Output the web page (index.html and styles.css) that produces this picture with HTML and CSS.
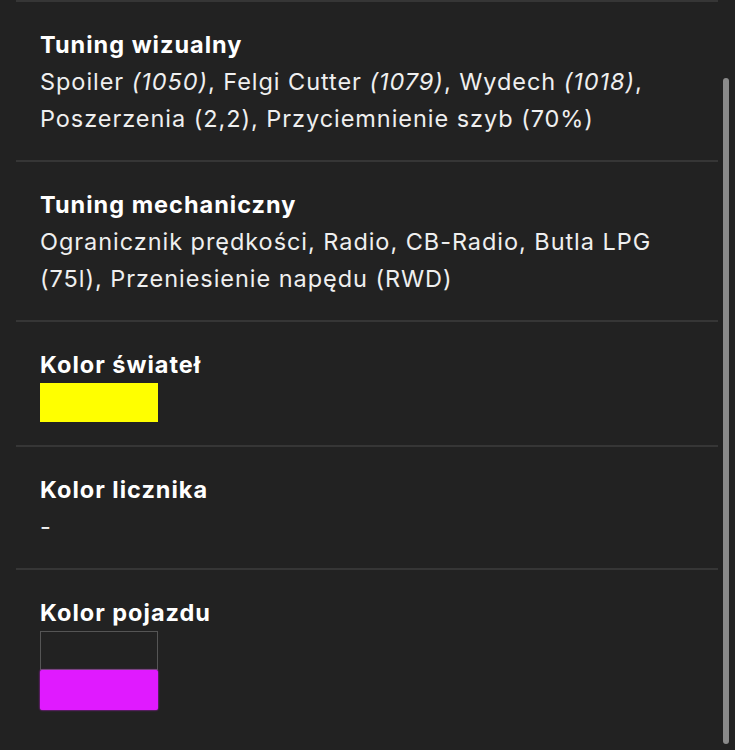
FILE: index.html
```html
<!DOCTYPE html>
<html lang="pl">
<head>
    <meta charset="UTF-8">
    <meta name="viewport" content="width=device-width, initial-scale=1.0">
    <title>Pojazd</title>
    <link rel="stylesheet" href="styles.css">
</head>
<body>
    <div class="list">
        <div class="item">
            <div class="label">Tuning wizualny</div>
            <div class="value">Spoiler <i>(1050)</i>, Felgi Cutter <i>(1079)</i>, Wydech <i>(1018)</i>, Poszerzenia (2,2), Przyciemnienie szyb (70%)</div>
        </div>
        <div class="item">
            <div class="label">Tuning mechaniczny</div>
            <div class="value">Ogranicznik prędkości, Radio, CB-Radio, Butla LPG (75l), Przeniesienie napędu (RWD)</div>
        </div>
        <div class="item">
            <div class="label">Kolor świateł</div>
            <div class="swatch yellow"></div>
        </div>
        <div class="item">
            <div class="label">Kolor licznika</div>
            <div class="value">-</div>
        </div>
        <div class="item">
            <div class="label">Kolor pojazdu</div>
            <div class="swatch dark"></div>
            <div class="swatch magenta"></div>
        </div>
    </div>
    <div class="scrollbar"></div>
</body>
</html>
```
FILE: styles.css
```css
html, body { margin: 0; padding: 0; }
body { background-color: #222222; color: #f2f2f2; font-family: Inter, "Noto Sans", sans-serif; height: 750px; overflow: hidden; position: relative; }
.list { margin: 0 17px 0 16px; border-top: 2px solid #363636; }
.item { padding: 24px 24px 23px; border-bottom: 2px solid #363636; }
.item:last-child { border-bottom: none; }
.label { font-size: 23.5px; font-weight: 700; line-height: 37px; letter-spacing: 1px; color: #ffffff; }
.value { font-size: 23.5px; line-height: 37px; letter-spacing: 0.95px; color: #efefef; }
.value i { font-style: italic; }
.swatch { width: 118px; height: 39px; box-sizing: border-box; }
.yellow { background-color: #ffff00; }
.dark { background-color: #222222; border: 1px solid #555555; }
.magenta { height: 40px; background-color: #e01aff; border-radius: 2px; box-shadow: 0 0 2px #e01aff; }
.scrollbar { position: absolute; right: 6px; top: 78px; width: 6px; height: 666px; border-radius: 3px; background-color: #8a8a8a; }
```
